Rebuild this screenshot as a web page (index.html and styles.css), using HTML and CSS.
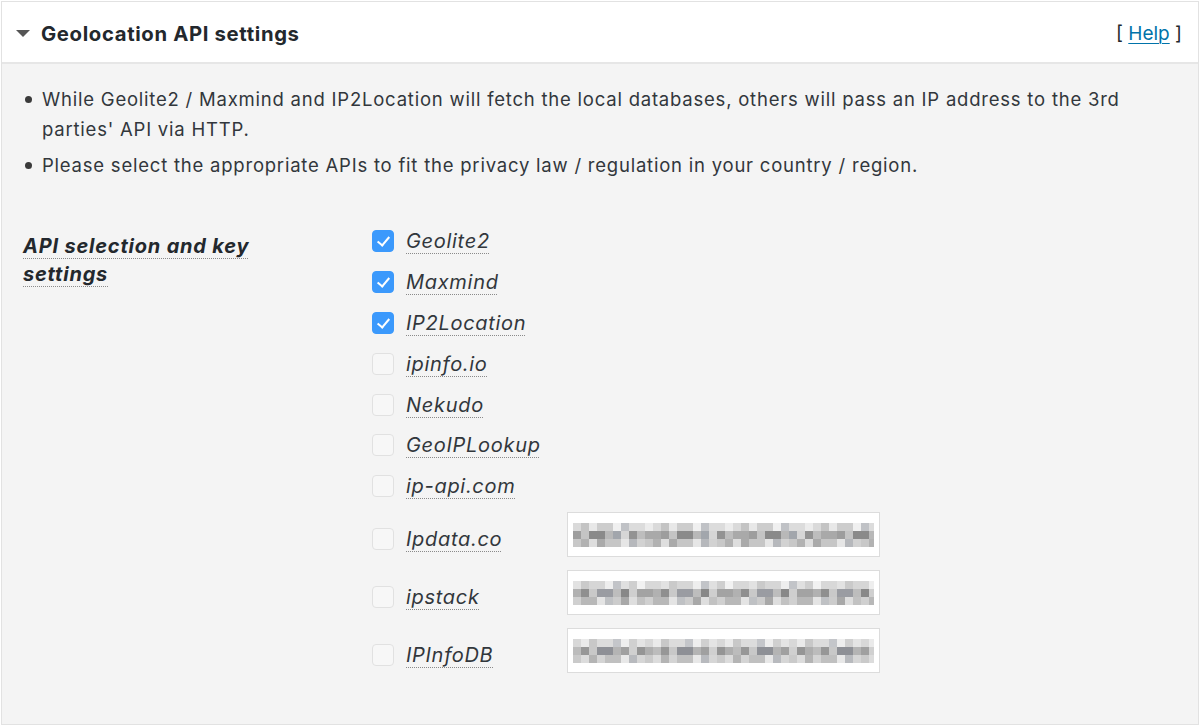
FILE: index.html
```html
<!DOCTYPE html>
<html lang="en">
<head>
<meta charset="utf-8">
<title>Geolocation API settings</title>
<link rel="stylesheet" href="styles.css">
</head>
<body>
<div class="panel">
  <div class="panel-head">
    <span class="toggle"></span>
    <h2 class="title">Geolocation API settings</h2>
    <span class="help">[ <a href="#">Help</a> ]</span>
  </div>
  <div class="panel-body">
    <ul class="notes">
      <li>While Geolite2 / Maxmind and IP2Location will fetch the local databases, others will pass an IP address to the 3rd parties' API via HTTP.</li>
      <li>Please select the appropriate APIs to fit the privacy law / regulation in your country / region.</li>
    </ul>
    <div class="form-row">
      <div class="form-label"><span class="dotted">API selection and key settings</span></div>
      <div class="apis">
        <div class="api"><span class="cb on"></span><span class="name">Geolite2</span></div>
        <div class="api"><span class="cb on"></span><span class="name">Maxmind</span></div>
        <div class="api"><span class="cb on"></span><span class="name">IP2Location</span></div>
        <div class="api"><span class="cb"></span><span class="name">ipinfo.io</span></div>
        <div class="api"><span class="cb"></span><span class="name">Nekudo</span></div>
        <div class="api"><span class="cb"></span><span class="name">GeoIPLookup</span></div>
        <div class="api"><span class="cb"></span><span class="name">ip-api.com</span></div>
        <div class="api keyed"><span class="cb"></span><span class="name">Ipdata.co</span><div class="keybox"><div class="mosaic m1"></div></div></div>
        <div class="api keyed"><span class="cb"></span><span class="name">ipstack</span><div class="keybox"><div class="mosaic m2"></div></div></div>
        <div class="api keyed"><span class="cb"></span><span class="name">IPInfoDB</span><div class="keybox"><div class="mosaic m3"></div></div></div>
      </div>
    </div>
  </div>
</div>
</body>
</html>
```
FILE: styles.css
```css
* { box-sizing: border-box; }
html, body { margin: 0; padding: 0; background: #fff; }
body {
  font-family: Inter, "Noto Sans", "Liberation Sans", sans-serif;
  color: #32373c;
  width: 1200px;
  height: 726px;
  overflow: hidden;
  padding: 1px;
}
.panel {
  border: 1px solid #e2e2e2;
  height: 724px;
  display: flex;
  flex-direction: column;
  background: #f4f4f4;
}
.panel-head {
  height: 62px;
  background: #fff;
  border-bottom: 2px solid #e6e6e6;
  display: flex;
  align-items: center;
  padding: 2px 16px 0 14px;
}
.toggle {
  width: 0;
  height: 0;
  border-left: 7px solid transparent;
  border-right: 7px solid transparent;
  border-top: 7px solid #555;
  margin: 0 11px 0 0;
}
.title {
  margin: 0;
  font-size: 20.3px;
  font-weight: 700;
  color: #23282d;
  flex: 1;
  letter-spacing: 0.65px;
}
.help {
  font-size: 19px;
  color: #23282d;
}
.help a {
  color: #0073aa;
  text-decoration: underline;
  text-underline-offset: 3px;
  text-decoration-thickness: 1px;
}
.panel-body {
  flex: 1;
  padding: 20px 24px 0 21px;
}
.notes {
  list-style: none;
  margin: 0;
  padding: 0;
  font-size: 18.5px;
  line-height: 30px;
  letter-spacing: 0.78px;
  color: #32373c;
}
.notes li {
  position: relative;
  padding-left: 19px;
  margin-bottom: 6px;
}
.notes li::before {
  content: "";
  position: absolute;
  left: 2px;
  top: 12px;
  width: 7px;
  height: 7px;
  border-radius: 50%;
  background: #3a3a3a;
}
.form-row {
  display: flex;
  margin-top: 52px;
}
.form-label {
  width: 349px;
  flex: none;
  padding-right: 80px;
  font-size: 20px;
  font-weight: 700;
  font-style: italic;
  line-height: 28px;
  letter-spacing: 0.8px;
  color: #23282d;
}
.dotted {
  text-decoration: underline dotted #8a8a8a;
  text-underline-offset: 5px;
  text-decoration-thickness: 1px;
}
.apis {
  display: flex;
  flex-direction: column;
  margin-top: -11px;
}
.api {
  height: 40.8px;
  display: flex;
  align-items: center;
}
.cb {
  width: 22px;
  height: 22px;
  border-radius: 4px;
  border: 1px solid #e1e1e1;
  background: #f7f7f7;
  flex: none;
  margin-right: 12px;
  position: relative;
}
.cb.on {
  background: #3b99fc;
  border-color: #3b99fc;
}
.cb.on::after {
  content: "";
  position: absolute;
  left: 7px;
  top: 3px;
  width: 5px;
  height: 10px;
  border-right: 2px solid #fff;
  border-bottom: 2px solid #fff;
  transform: rotate(40deg);
}
.name {
  font-size: 20px;
  font-style: italic;
  letter-spacing: 0.7px;
  color: #32373c;
  text-decoration: underline dotted #8a8a8a;
  text-underline-offset: 5px;
  text-decoration-thickness: 1px;
  width: 161px;
}
.api.keyed {
  height: 58px;
}
.api.keyed .cb, .api.keyed .name {
  margin-top: 7px;
}
.keybox {
  width: 313px;
  height: 45px;
  border: 1px solid #dcdcdc;
  background: #fff;
  margin-bottom: 3px;
  padding: 10px 5px 0 5px;
}
.mosaic {
  height: 24px;
  background-repeat: no-repeat;
  background-size: 100% 8px;
  background-position: 0 0, 0 8px, 0 16px;
  background-image:
    repeating-linear-gradient(90deg, #dadada 0 8px, #c4c4c4 8px 16px, #e8e8e8 16px 24px, #cdcdcd 24px 40px, #f0f0f0 40px 48px, #c0c2c6 48px 56px, #dcdcdc 56px 72px, #ececec 72px 80px),
    repeating-linear-gradient(90deg, #9d9d9d 0 8px, #c4c4c4 8px 16px, #8a8a8a 16px 32px, #b8b8b8 32px 40px, #a2a6ac 40px 48px, #d6d6d6 48px 56px, #939393 56px 64px, #bdbdbd 64px 72px, #a9a9a9 72px 88px),
    repeating-linear-gradient(90deg, #c8c8c8 0 8px, #b2b2b2 8px 16px, #dedede 16px 24px, #aaa 24px 32px, #c6c6c6 32px 48px, #e6e6e6 48px 56px, #b6b8bc 56px 64px, #d2d2d2 64px 72px);
}
.mosaic.m2 {
  background-image:
    repeating-linear-gradient(90deg, #e2e2e2 0 8px, #cacaca 8px 16px, #d6d6d6 16px 32px, #eeeeee 32px 40px, #c2c4c8 40px 48px, #e0e0e0 48px 56px, #cfcfcf 56px 64px, #f2f2f2 64px 72px, #d8d8d8 72px 88px),
    repeating-linear-gradient(90deg, #b1b1b1 0 8px, #8f8f8f 8px 16px, #c9c9c9 16px 24px, #9a9ca2 24px 40px, #bdbdbd 40px 48px, #888 48px 56px, #cfcfcf 56px 64px, #a3a3a3 64px 80px),
    repeating-linear-gradient(90deg, #d0d0d0 0 8px, #b8b8b8 8px 24px, #e4e4e4 24px 32px, #bfc1c4 32px 40px, #cccccc 40px 48px, #a8a8a8 48px 56px, #dedede 56px 64px, #c2c2c2 64px 72px);
}
.mosaic.m3 {
  background-image:
    repeating-linear-gradient(90deg, #d8d8d8 0 8px, #eaeaea 8px 16px, #c8c8c8 16px 24px, #dcdcdc 24px 40px, #c4c6ca 40px 48px, #eeeeee 48px 56px, #d0d0d0 56px 64px, #e4e4e4 64px 72px),
    repeating-linear-gradient(90deg, #bcbcbc 0 8px, #979797 8px 16px, #c8c8c8 16px 24px, #8e9096 24px 40px, #b4b4b4 40px 48px, #a0a0a0 48px 56px, #d0d0d0 56px 64px, #959595 64px 72px, #aeaeae 72px 80px),
    repeating-linear-gradient(90deg, #cacaca 0 8px, #dcdcdc 8px 16px, #b4b4b4 16px 24px, #d4d4d4 24px 32px, #c0c0c0 32px 48px, #e8e8e8 48px 56px, #b8babe 56px 64px, #d6d6d6 64px 72px);
}
```
